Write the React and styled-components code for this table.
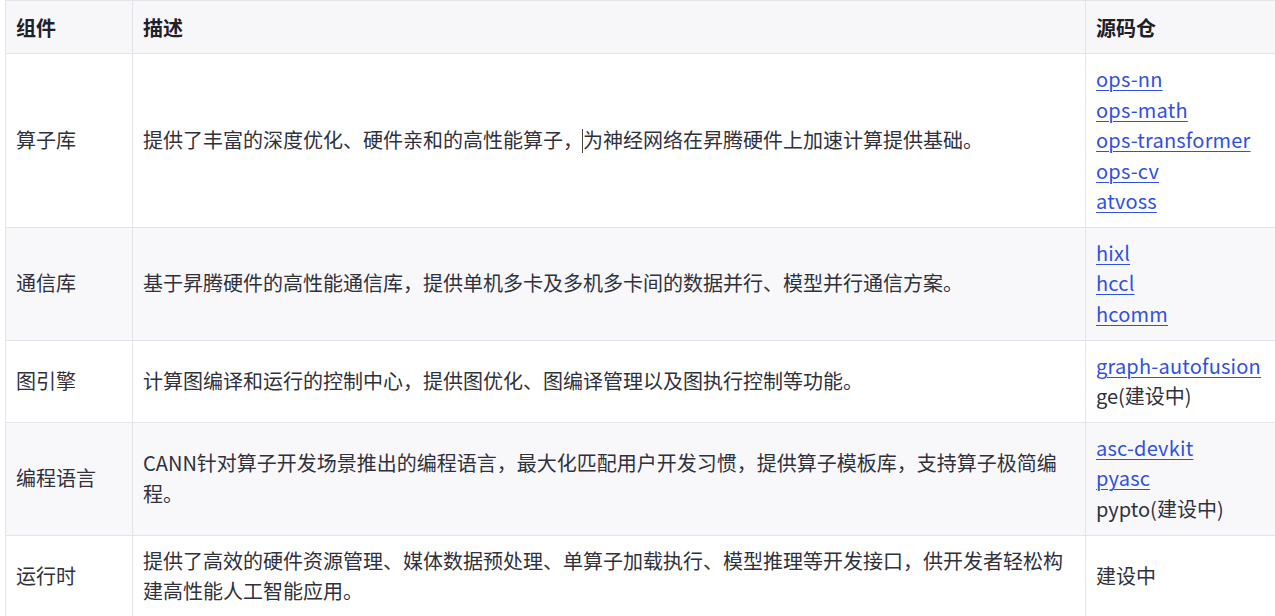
import styled, { createGlobalStyle } from "styled-components";

const GlobalStyle = createGlobalStyle`
  html, body {
    margin: 0;
    padding: 0;
    background: #ffffff;
    overflow: hidden;
  }
  body {
    font-family: "Noto Sans CJK SC", "Noto Sans", sans-serif;
  }
`;

const Page = styled.div`
  padding: 0 0 0 5px;
`;

const Table = styled.table`
  border-collapse: collapse;
  table-layout: fixed;
  width: 1272px;
  font-size: 20px;
  line-height: 30.4px;
  color: #30313b;
`;

const Col = styled.col`
  width: ${(p) => p.$w}px;
`;

const Row = styled.tr`
  background: ${(p) => (p.$striped ? "#f8f8fb" : "#ffffff")};
`;

const HeadCell = styled.th`
  text-align: left;
  font-weight: 700;
  color: #1f2029;
  background: #f7f7fa;
  border: 1px solid #e3e3ec;
  padding: 12px 10px 10px;
  vertical-align: middle;
`;

const Cell = styled.td`
  border: 1px solid #e3e3ec;
  padding: 10px 10px 10.5px;
  vertical-align: middle;
  word-break: break-all;
`;

const RepoList = styled.div`
  display: flex;
  flex-direction: column;
  align-items: flex-start;
`;

const RepoLink = styled.a`
  color: #3050e0;
  text-decoration: underline;
  text-underline-offset: 3px;
  text-decoration-thickness: 1px;
  white-space: nowrap;
  letter-spacing: 0.2px;
`;

const Plain = styled.span`
  white-space: nowrap;
`;

const Caret = styled.span`
  display: inline-block;
  width: 0;
  height: 24px;
  margin-left: -1px;
  border-left: 1px solid #444;
  vertical-align: -5px;
`;

const rows = [
  {
    name: "算子库",
    desc: (
      <>
        提供了丰富的深度优化、硬件亲和的高性能算子，
        <Caret />
        为神经网络在昇腾硬件上加速计算提供基础。
      </>
    ),
    repos: [
      { label: "ops-nn", link: true },
      { label: "ops-math", link: true },
      { label: "ops-transformer", link: true },
      { label: "ops-cv", link: true },
      { label: "atvoss", link: true },
    ],
  },
  {
    name: "通信库",
    desc: "基于昇腾硬件的高性能通信库，提供单机多卡及多机多卡间的数据并行、模型并行通信方案。",
    repos: [
      { label: "hixl", link: true },
      { label: "hccl", link: true },
      { label: "hcomm", link: true },
    ],
  },
  {
    name: "图引擎",
    desc: "计算图编译和运行的控制中心，提供图优化、图编译管理以及图执行控制等功能。",
    repos: [
      { label: "graph-autofusion", link: true },
      { label: "ge(建设中)", link: false },
    ],
  },
  {
    name: "编程语言",
    desc: "CANN针对算子开发场景推出的编程语言，最大化匹配用户开发习惯，提供算子模板库，支持算子极简编程。",
    repos: [
      { label: "asc-devkit", link: true },
      { label: "pyasc", link: true },
      { label: "pypto(建设中)", link: false },
    ],
  },
  {
    name: "运行时",
    desc: "提供了高效的硬件资源管理、媒体数据预处理、单算子加载执行、模型推理等开发接口，供开发者轻松构建高性能人工智能应用。",
    repos: [{ label: "建设中", link: false }],
  },
];

export default function App() {
  return (
    <Page>
      <GlobalStyle />
      <Table>
        <colgroup>
          <Col $w={127} />
          <Col $w={953} />
          <Col $w={192} />
        </colgroup>
        <thead>
          <tr>
            <HeadCell>组件</HeadCell>
            <HeadCell>描述</HeadCell>
            <HeadCell>源码仓</HeadCell>
          </tr>
        </thead>
        <tbody>
          {rows.map((r, i) => (
            <Row key={r.name} $striped={i % 2 === 1}>
              <Cell>{r.name}</Cell>
              <Cell>{r.desc}</Cell>
              <Cell>
                <RepoList>
                  {r.repos.map((repo) =>
                    repo.link ? (
                      <RepoLink key={repo.label} href="#">
                        {repo.label}
                      </RepoLink>
                    ) : (
                      <Plain key={repo.label}>{repo.label}</Plain>
                    )
                  )}
                </RepoList>
              </Cell>
            </Row>
          ))}
        </tbody>
      </Table>
    </Page>
  );
}
